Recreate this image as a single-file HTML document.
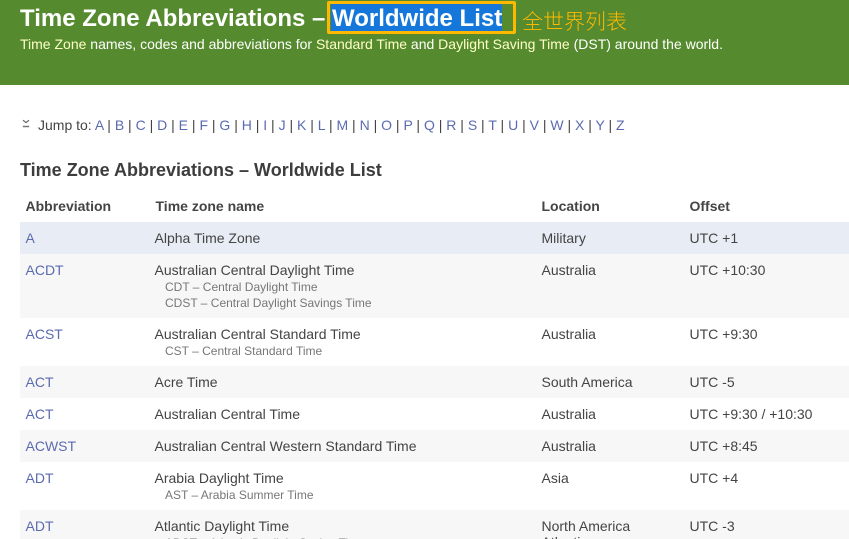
<!DOCTYPE html>
<html><head><meta charset="utf-8">
<style>
html,body{margin:0;padding:0;background:#fff;width:849px;height:539px;overflow:hidden}
#p{width:849px;height:539px;overflow:hidden;position:relative;font-family:"Liberation Sans",sans-serif;font-size:14px;color:#444}
.t{position:absolute;white-space:nowrap;line-height:16px}
.r{position:absolute;left:20px;right:0}
a{color:#5b6bb0;text-decoration:none}
.s{font-size:12px;color:#777}
.b{font-weight:bold}
.hd{color:#ffffc8}
</style></head><body><div id="p">
<div style="position:absolute;left:0;top:0;width:849px;height:85px;background:#558a2e"></div>
<div class="t b" style="left:20px;top:5px;font-size:24px;line-height:28px;color:#fff">Time Zone Abbreviations –</div>
<div style="position:absolute;left:327px;top:1px;width:183px;height:27px;border:3px solid #ffb800;border-radius:2px"></div>
<div class="t b" style="left:331px;top:4px;width:170px;height:27px;padding-left:1px;background:#1477d9;font-size:24px;line-height:30px;color:#fff">Worldwide List</div>
<div class="t" style="left:522px;top:8px;font-size:21px;line-height:26px;color:#ffb800;font-family:'Noto Sans CJK SC',sans-serif;font-weight:300">全世界列表</div>
<div class="t" style="left:20px;top:36px;color:#fff"><span class="hd">Time Zone</span> names, codes and abbreviations for <span class="hd">Standard Time</span> and <span class="hd">Daylight Saving Time</span> (DST) around the world.</div>

<svg style="position:absolute;left:22px;top:119px" width="10" height="10"><path d="M1 1.2L4 3.6L7 1.2" fill="none" stroke="#666" stroke-width="1.2"/><path d="M.8 7.5H7.2" stroke="#777" stroke-width="1.5"/></svg>
<div class="t" style="left:38px;top:117px">Jump to: <a>A</a> | <a>B</a> | <a>C</a> | <a>D</a> | <a>E</a> | <a>F</a> | <a>G</a> | <a>H</a> | <a>I</a> | <a>J</a> | <a>K</a> | <a>L</a> | <a>M</a> | <a>N</a> | <a>O</a> | <a>P</a> | <a>Q</a> | <a>R</a> | <a>S</a> | <a>T</a> | <a>U</a> | <a>V</a> | <a>W</a> | <a>X</a> | <a>Y</a> | <a>Z</a></div>

<div class="t b" style="left:20px;top:160px;font-size:18px;line-height:20px;color:#3d3d3d">Time Zone Abbreviations – Worldwide List</div>
<div class="t b" style="left:25.5px;top:198px">Abbreviation</div>
<div class="t b" style="left:155.5px;top:198px">Time zone name</div>
<div class="t b" style="left:541.5px;top:198px">Location</div>
<div class="t b" style="left:689.5px;top:198px">Offset</div>

<div class="r" style="top:222px;height:32px;background:#e8edf5"></div>
<div class="r" style="top:254px;height:64px;background:#f7f7f7"></div>
<div class="r" style="top:366px;height:32px;background:#f7f7f7"></div>
<div class="r" style="top:430px;height:32px;background:#f7f7f7"></div>
<div class="r" style="top:510px;height:29px;background:#f7f7f7"></div>

<div class="t" style="left:25.5px;top:230px"><a>A</a></div><div class="t" style="left:154.5px;top:230px">Alpha Time Zone</div><div class="t" style="left:541.5px;top:230px">Military</div><div class="t" style="left:689.5px;top:230px">UTC +1</div>

<div class="t" style="left:25.5px;top:262px"><a>ACDT</a></div><div class="t" style="left:154.5px;top:262px">Australian Central Daylight Time</div><div class="t s" style="left:165px;top:279px">CDT – Central Daylight Time</div><div class="t s" style="left:165px;top:295px">CDST – Central Daylight Savings Time</div><div class="t" style="left:541.5px;top:262px">Australia</div><div class="t" style="left:689.5px;top:262px">UTC +10:30</div>

<div class="t" style="left:25.5px;top:326px"><a>ACST</a></div><div class="t" style="left:154.5px;top:326px">Australian Central Standard Time</div><div class="t s" style="left:165px;top:343px">CST – Central Standard Time</div><div class="t" style="left:541.5px;top:326px">Australia</div><div class="t" style="left:689.5px;top:326px">UTC +9:30</div>

<div class="t" style="left:25.5px;top:374px"><a>ACT</a></div><div class="t" style="left:154.5px;top:374px">Acre Time</div><div class="t" style="left:541.5px;top:374px">South America</div><div class="t" style="left:689.5px;top:374px">UTC -5</div>

<div class="t" style="left:25.5px;top:406px"><a>ACT</a></div><div class="t" style="left:154.5px;top:406px">Australian Central Time</div><div class="t" style="left:541.5px;top:406px">Australia</div><div class="t" style="left:689.5px;top:406px">UTC +9:30 / +10:30</div>

<div class="t" style="left:25.5px;top:438px"><a>ACWST</a></div><div class="t" style="left:154.5px;top:438px">Australian Central Western Standard Time</div><div class="t" style="left:541.5px;top:438px">Australia</div><div class="t" style="left:689.5px;top:438px">UTC +8:45</div>

<div class="t" style="left:25.5px;top:470px"><a>ADT</a></div><div class="t" style="left:154.5px;top:470px">Arabia Daylight Time</div><div class="t s" style="left:165px;top:487px">AST – Arabia Summer Time</div><div class="t" style="left:541.5px;top:470px">Asia</div><div class="t" style="left:689.5px;top:470px">UTC +4</div>

<div class="t" style="left:25.5px;top:518px"><a>ADT</a></div><div class="t" style="left:154.5px;top:518px">Atlantic Daylight Time</div><div class="t s" style="left:165px;top:535px">ADST – Atlantic Daylight Saving Time</div><div class="t" style="left:541.5px;top:518px">North America</div><div class="t" style="left:541.5px;top:534px">Atlantic</div><div class="t" style="left:689.5px;top:518px">UTC -3</div>
</div></body></html>
